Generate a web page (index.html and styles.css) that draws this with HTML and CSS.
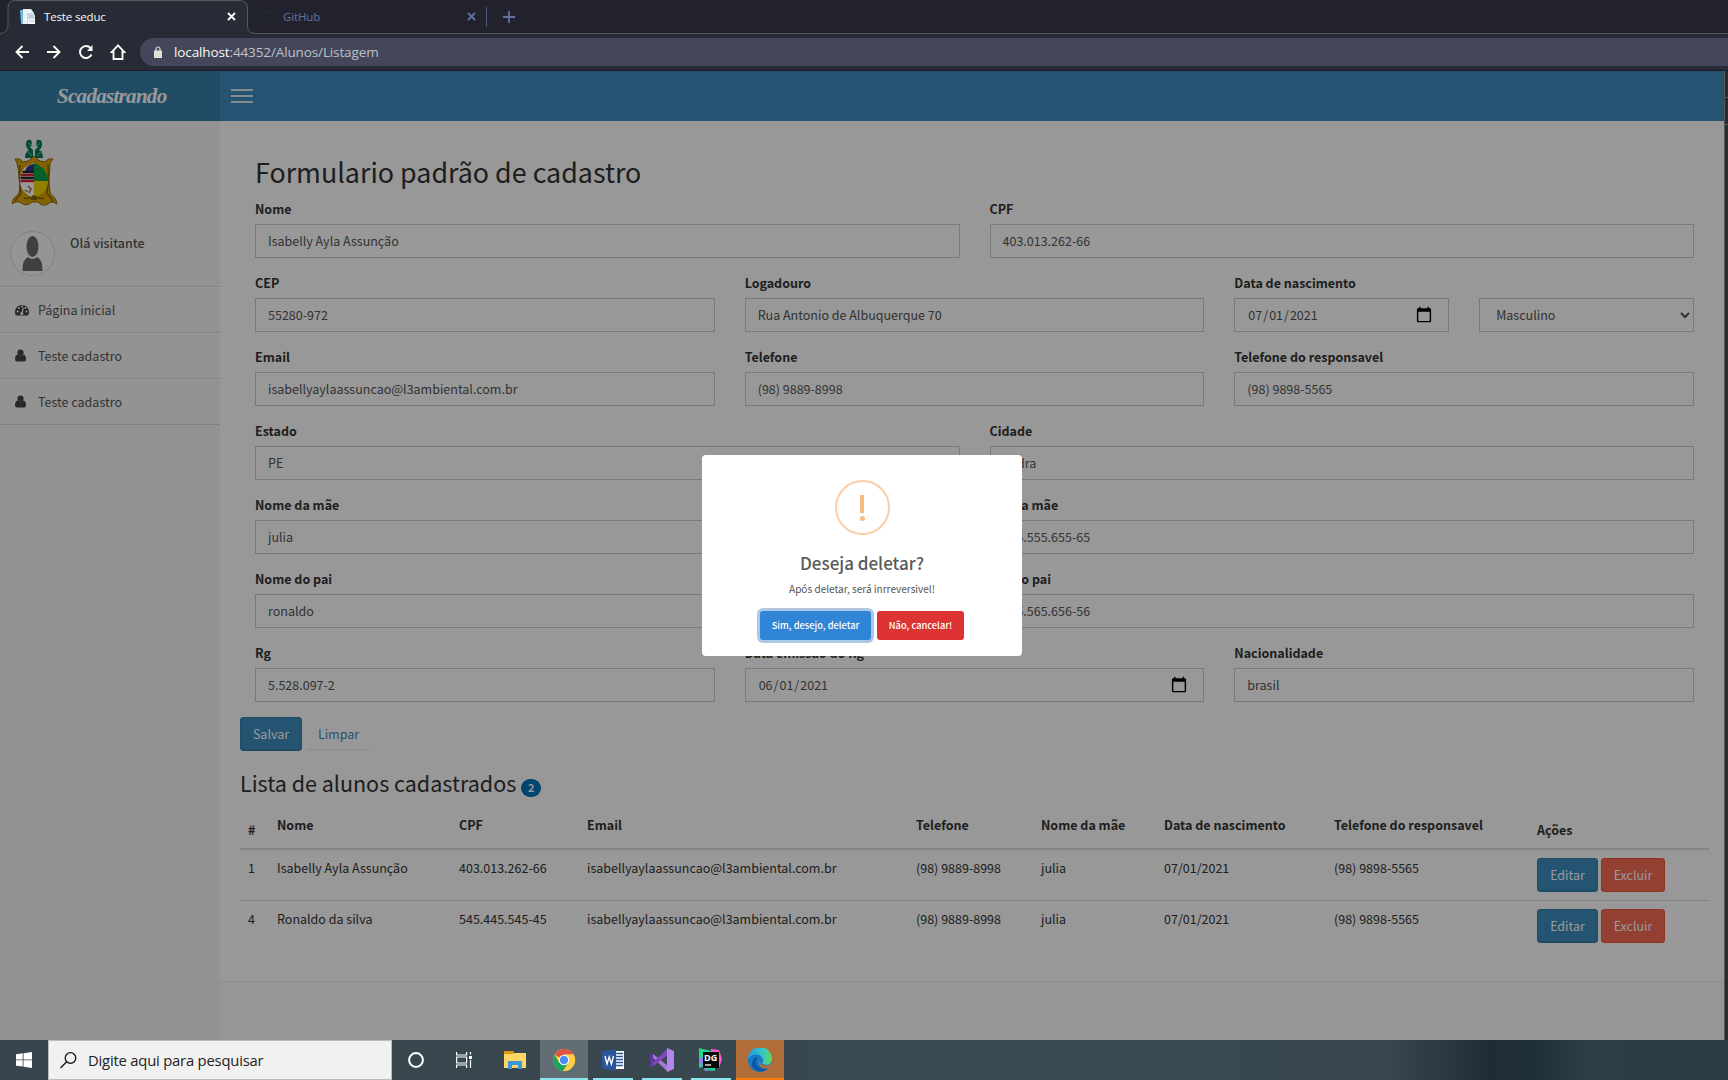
FILE: index.html
```html
<!DOCTYPE html>
<html lang="pt-br">
<head>
<meta charset="utf-8">
<title>Teste seduc</title>
<link rel="stylesheet" href="styles.css">
</head>
<body>
<div class="tabs">
  <svg class="tab-outline" width="256" height="34" fill="none"><path d="M0 33.500Q8 33 8 25V8Q8 .5 15.500 .5H239Q247.500 .5 247.500 8V26Q247.500 33.500 255 33.500V34H0Z" fill="#282a36"/><path d="M0 33.500Q8 33 8 25V8Q8 .5 15.500 .5H239Q247.500 .5 247.500 8V26Q247.500 33.500 256 33.500" stroke="#56575f"/></svg>
  <div class="tab tab-active">
    <svg width="16" height="16"><path d="M0 1h5v14H1z" fill="#72b8dc"/><path d="M3 0h8l3 4v11H3z" fill="#eef3f6"/><path d="M7 4h6l2 2v9H7z" fill="#cdd7e4"/><path d="M8 10h7v5H8z" fill="#f6f7fa"/><path d="M9 7h4M9 12h5" stroke="#aebccc"/></svg>
    <span class="tab-name">Teste seduc</span>
    <svg class="tab-close" width="9" height="9" stroke="#fff" stroke-width="1.800"><path d="M1 1l7 7M8 1L1 8"/></svg>
  </div>
  <div class="tab tab-idle">
    <svg width="16" height="16" viewBox="0 0 16 16" fill="#1e2931"><path d="M8 1a7 7 0 0 0-2.200 13.600v-2C3.800 13 3.400 11.700 3.400 11.700c.8.100 1.200.9 1.200.9.500.5 1 .4 1.400.2 0-.5.200-.8.400-1C4.700 11.500 3.200 11 3.200 8.200c0-.8.300-1.400.7-1.900 0-.5-.2-1.200.1-2 0 0 .6-.2 2 .7a7 7 0 0 1 4 0c1.400-.9 2-.7 2-.7.300.8.100 1.500.1 2 .4.500.7 1.100.7 1.900 0 2.800-1.500 3.300-3.200 3.600.3.200.5.700.5 1.400v1.500A7 7 0 0 0 8 1z"/></svg>
    <span class="tab-name">GitHub</span>
    <svg class="tab-close" width="9" height="9" stroke="#6272a4" stroke-width="1.800"><path d="M1 1l7 7M8 1L1 8"/></svg>
  </div>
  <i class="tab-split"></i>
  <svg class="tab-new" width="12" height="12" stroke="#6272a4" stroke-width="1.800"><path d="M6 0v12M0 6h12"/></svg>
</div>
<div class="toolbar">
  <svg width="14" height="14" fill="none" stroke="#f8f8f2" stroke-width="1.900"><path d="M14 7H1.500M7.500 1L1.500 7l6 6"/></svg>
  <svg width="14" height="14" fill="none" stroke="#f8f8f2" stroke-width="1.900"><path d="M0 7h12.500M6.500 1l6 6-6 6"/></svg>
  <svg width="14" height="14" fill="none" stroke="#f8f8f2" stroke-width="2"><path d="M12.500 9.500A6 6 0 1 1 11.500 3"/><path d="M13.500 0v6H8z" fill="#f8f8f2" stroke="none"/></svg>
  <svg class="home" width="16" height="16" fill="none" stroke="#f8f8f2" stroke-width="1.900"><path d="M8 1.400L1.700 8H3.500v7h9V8h1.800z"/></svg>
  <div class="address">
    <svg width="8" height="12" viewBox="0 0 8 12"><path d="M0 4.500h8V12H0z" fill="#e0e2da"/><path d="M2 5V3a2 2 0 0 1 4 0v2" fill="none" stroke="#e0e2da" stroke-width="1.200"/></svg>
    <span><b>localhost</b>:44352/Alunos/Listagem</span>
  </div>
</div>

<div class="viewport">
  <div class="app">
    <header class="topbar">
      <div class="logo">Scadastrando</div>
      <div class="burger"><i></i><i></i><i></i></div>
    </header>
    <aside class="sidebar">
      <svg class="crest" width="48" height="70" viewBox="0 0 48 70">
        <path d="M21 2q-5-1-5 4 0 4 3 6-4 2-4 8h8V12l-3-3q3-3 1-7zM27 2q5-1 5 4 0 4-3 6 4 2 4 8h-8V12l3-3q-3-3-1-7z" fill="#087b50"/>
        <path d="M17 13l5 5M32 13l-5 5M18 5l4 3M30 5l-4 3" stroke="#4bb18b" stroke-width="1.300"/>
        <path d="M5 21q6-1 7 3 6 0 9-3l3-3 3 3q3 3 9 3 1-4 7-3l-3 4q0 9-1 15 0 12 2 17 5 2 6 9-6-4-9 0-6 3-10-2h-6q-5 5-11 1-3-3-9 1 1-7 6-9 3-6 1-16 0-9-2-16z" fill="#d9a404" stroke="#8f6b0c"/>
        <path d="M10 27q-1 17 1 28l-6 8M38 27q1 17-1 28l6 8M14 60q5 2 8-3M34 60q-5 2-8-3" fill="none" stroke="#876408" stroke-width="1.500"/>
        <path d="M24 25v35q-14-5-14-18 0-13 14-17z" fill="#fff"/>
        <path d="M12.500 34H24M10.500 40H24" stroke="#272727" stroke-width="2.500"/><path d="M11 37h13M10.500 43H24" stroke="#d91f3b" stroke-width="2.300"/>
        <path d="M17 29q3-3 7-3v7h-9z" fill="#383087"/><path d="M24 25q13 4 14 18H24z" fill="#0aa042"/><path d="M38 43q0 12-14 17V43z" fill="#f4d400"/>
        <path d="M15 52l3 2M18 48l3 3-2 4" fill="none" stroke="#8a794c" stroke-width="1.500"/><path d="M21 59q3-4 6 0v3h-6z" fill="#806006"/>
      </svg>
      <div class="user">
        <svg width="45" height="45"><circle cx="22.500" cy="22.500" r="22" fill="#f8f8f8" stroke="#d8d8da"/><ellipse cx="22.500" cy="15.500" rx="6" ry="10.500" fill="#6b6b6b"/><path d="M12.500 40q0-12 5.500-14 4.500 4 9 0 5.500 2 5.500 14z" fill="#6b6b6b"/></svg>
        <b>Olá visitante</b>
      </div>
      <nav>
        <a><svg width="14" height="14" viewBox="0 0 14 14"><path d="M1 12.500A7 7 0 1 1 13 12.500z" fill="#444"/><g fill="#f9fafc"><circle cx="2.600" cy="8.500" r="1"/><circle cx="4" cy="5" r="1"/><circle cx="7.200" cy="3.600" r="1"/><circle cx="10.400" cy="5" r="1"/><circle cx="11.600" cy="8.500" r="1"/></g><path d="M8.300 5L7 10" stroke="#f9fafc" stroke-width="1.200"/><circle cx="6.800" cy="10.500" r="1.500" fill="#f9fafc"/></svg>Página inicial</a>
        <a><svg width="14" height="14"><path d="M0 10.500q0-5 3-5 2.500 2 5 0 3 0 3 5 0 2-2 2H2q-2 0-2-2z" fill="#444"/><circle cx="5.500" cy="3.500" r="3.100" fill="#444"/></svg>Teste cadastro</a>
        <a><svg width="14" height="14"><path d="M0 10.500q0-5 3-5 2.500 2 5 0 3 0 3 5 0 2-2 2H2q-2 0-2-2z" fill="#444"/><circle cx="5.500" cy="3.500" r="3.100" fill="#444"/></svg>Teste cadastro</a>
      </nav>
    </aside>
    <main class="content">
      <form class="form">
        <h2>Formulario padrão de cadastro</h2>
        <div class="row halves">
          <label>Nome<input value="Isabelly Ayla Assunção"></label>
          <label>CPF<input value="403.013.262-66"></label>
        </div>
        <div class="row thirds">
          <label>CEP<input value="55280-972"></label>
          <label>Logadouro<input value="Rua Antonio de Albuquerque 70"></label>
          <div class="row halves nested">
            <label>Data de nascimento<input type="date" value="2021-07-01"></label>
            <label>&nbsp;<select><option>Masculino</option></select></label>
          </div>
        </div>
        <div class="row thirds">
          <label>Email<input value="isabellyaylaassuncao@l3ambiental.com.br"></label>
          <label>Telefone<input value="(98) 9889-8998"></label>
          <label>Telefone do responsavel<input value="(98) 9898-5565"></label>
        </div>
        <div class="row halves">
          <label>Estado<input value="PE"></label>
          <label>Cidade<input value="Pedra"></label>
        </div>
        <div class="row halves">
          <label>Nome da mãe<input value="julia"></label>
          <label>Cpf da mãe<input value="555.555.655-65"></label>
        </div>
        <div class="row halves">
          <label>Nome do pai<input value="ronaldo"></label>
          <label>Cpf do pai<input value="565.565.656-56"></label>
        </div>
        <div class="row thirds">
          <label>Rg<input value="5.528.097-2"></label>
          <label>Data emissão do Rg<input type="date" value="2021-06-01"></label>
          <label>Nacionalidade<input value="brasil"></label>
        </div>
      </form>
      <div class="actions"><button class="btn btn-primary save">Salvar</button><button class="btn btn-link">Limpar</button></div>
      <h3>Lista de alunos cadastrados <span class="badge">2</span></h3>
      <table>
        <colgroup><col class="c-id"><col class="c-name"><col class="c-cpf"><col class="c-email"><col class="c-tel"><col class="c-mother"><col class="c-birth"><col class="c-resp"><col class="c-act"></colgroup>
        <thead><tr><th class="low">#</th><th>Nome</th><th>CPF</th><th>Email</th><th>Telefone</th><th>Nome da mãe</th><th>Data de nascimento</th><th>Telefone do responsavel</th><th class="low">Ações</th></tr></thead>
        <tbody>
          <tr><td>1</td><td>Isabelly Ayla Assunção</td><td>403.013.262-66</td><td>isabellyaylaassuncao@l3ambiental.com.br</td><td>(98) 9889-8998</td><td>julia</td><td>07/01/2021</td><td>(98) 9898-5565</td><td><div class="cell-actions"><button class="btn btn-primary edit">Editar</button><button class="btn btn-danger">Excluir</button></div></td></tr>
          <tr><td>4</td><td>Ronaldo da silva</td><td>545.445.545-45</td><td>isabellyaylaassuncao@l3ambiental.com.br</td><td>(98) 9889-8998</td><td>julia</td><td>07/01/2021</td><td>(98) 9898-5565</td><td><div class="cell-actions"><button class="btn btn-primary edit">Editar</button><button class="btn btn-danger">Excluir</button></div></td></tr>
        </tbody>
      </table>
    </main>
    <div class="overlay">
      <div class="modal">
        <div class="warn"><i></i><b></b></div>
        <h4>Deseja deletar?</h4>
        <p>Após deletar, será inrreversivel!</p>
        <div class="modal-actions"><button class="confirm">Sim, desejo, deletar</button><button class="cancel">Não, cancelar!</button></div>
      </div>
    </div>
  </div>
  <div class="edge-strip"><i></i><i></i></div>
</div>

<footer class="taskbar">
  <div class="start"><svg width="16" height="16" fill="#fff"><path d="M0 2.200L6.700 1.300V7.500H0zM7.500 1.200L16 0V7.500H7.500zM0 8.300H6.700V14.600L0 13.700zM7.500 8.300H16V16L7.500 14.700z"/></svg></div>
  <div class="search"><svg width="17" height="17" fill="none" stroke="#111" stroke-width="1.300"><circle cx="10.500" cy="6" r="5.300"/><path d="M6.700 9.800L.5 16"/></svg><span>Digite aqui para pesquisar</span></div>
  <div class="task"><svg width="16" height="16" fill="none" stroke="#fff" stroke-width="2"><circle cx="8" cy="8" r="6.900"/></svg></div>
  <div class="task"><svg width="16" height="16" fill="none" stroke="#fff" stroke-width="1.200"><path d="M.6 0v3h10V0M.6 16v-3h10v3M.6 5h10v6H.6zM14.500 0v2.500M14.500 8v8"/><path d="M13 4h3v3h-3z" fill="#fff" stroke="none"/></svg></div>
  <div class="task folder"><svg width="22" height="18"><path d="M0 0h9l1 2h12v15H0z" fill="#ffd767"/><path d="M0 0h9l1 2-1 1H0z" fill="#d99b13"/><path d="M4 18v-8h14v8h-4v-4H8v4z" fill="#3898dc"/></svg></div>
  <div class="task active chrome"><svg width="24" height="24" viewBox="0 0 24 24"><circle cx="12" cy="12" r="11" fill="#ffcd42"/><path d="M12 12L2.500 6.500A11 11 0 0 1 21.600 6.500H12z" fill="#de5246"/><path d="M12 12l-1 11A11 11 0 0 1 2.500 6.500L7.200 15z" fill="#1aa260"/><path d="M16.800 14.700L11 23l-4-8z" fill="#1aa260"/><path d="M16.800 14.700L11 23A11 11 0 0 0 21.600 6.500H12z" fill="#ffcd42"/><circle cx="12" cy="12" r="5.200" fill="#fff"/><circle cx="12" cy="12" r="4.200" fill="#4e8df5"/></svg></div>
  <div class="task open word"><svg width="23" height="22"><path d="M13 2h9v18h-9z" fill="#fff"/><path d="M14 4.500h7M14 7.500h7M14 10.500h7M14 13.500h7M14 16.500h7" stroke="#2b579a" stroke-width="1.300"/><path d="M0 2.500L14 0v22L0 19.500z" fill="#2b579a"/><path d="M3 7l2 8 2.200-7L9.400 15 11.500 7" fill="none" stroke="#fff" stroke-width="1.400"/></svg></div>
  <div class="task open"><svg width="24" height="24"><path d="M0 7l3-1 15 12V24z" fill="#a179dc"/><path d="M18 0L0 17l2 2L18 7z" fill="#7d48b9"/><path d="M0 6l3-1v14l-3-2z" fill="#6336a0"/><path d="M17 0l7 3v18l-7 3z" fill="#b585ee"/></svg></div>
  <div class="task open"><svg width="24" height="24"><path d="M0 0l12 3-3 14-9 3z" fill="#21d789"/><path d="M12 1l8 1 3 9-3 9-8-3z" fill="#ff5bd1"/><path d="M0 12l4-3 12 13-10 1-3-6z" fill="#9775f8"/><path d="M3 19h13v4l-8-1z" fill="#20c997"/><path d="M4 4h16v16H4z" fill="#090909"/><text class="dg" x="5" y="13">DG</text><path d="M6 17h6" stroke="#fff" stroke-width="1.300"/></svg></div>
  <div class="task edge"><svg width="24" height="24" viewBox="0 0 24 24"><defs><linearGradient id="e1"><stop stop-color="#229ce0"/><stop offset=".6" stop-color="#35c5c6"/><stop offset="1" stop-color="#65d957"/></linearGradient></defs><circle cx="12" cy="12" r="12" fill="#1479c8"/><path d="M0 11A12 12 0 0 1 24 11c0 5-5 7-9 5-2-1 1-2 0-5C13 6 5 4 0 11z" fill="url(#e1)"/><path d="M10 9c-5 5-1 13 9 12-4 5-15 2-15-5 0-4 3-7 6-7z" fill="#12549f"/><path d="M14 11c-4 2-2 5 1 6 3 1 7 0 8-1l1 2-2 2c-8 2-12-2-11-7 0-1 1-2 3-2z" fill="#b06d38"/></svg></div>
</footer>
</body>
</html>
```
FILE: styles.css
```css
* { box-sizing: border-box; }
body { margin: 0; width: 1728px; height: 1080px; overflow: hidden; display: flex; flex-direction: column; font-family: "Noto Sans CJK JP", sans-serif; font-size: 12.5px; line-height: 20px; color: #333; background: #21222c; }
svg { display: block; flex: none; }
button, input, select { font: inherit; }

/* browser frame */
.tabs { position: relative; height: 34px; flex: none; display: flex; align-items: center; background: #21222c; border-bottom: 1px solid #56575f; font: 12px/16px "Open Sans", sans-serif; }
.tab-outline { position: absolute; left: 0; top: 0; }
.tab { position: relative; display: flex; align-items: center; gap: 8px; height: 33px; color: #f8f8f2; }
.tab-name { flex: 1; font-size: 11.500px; letter-spacing: -.15px; }
.tab-active { width: 216px; margin-left: 20px; }
.tab-idle { width: 217px; margin-left: 23px; color: #6272a4; }
.tab-split { width: 1px; height: 20px; background: #50577a; margin-left: 10px; }
.tab-new { margin-left: 16px; }
.toolbar { height: 37px; flex: none; display: flex; align-items: center; gap: 18px; padding-left: 15px; background: #282a36; border-bottom: 1px solid #1b1a26; }
.home { margin-left: -1px; }
.address { flex: 1; height: 28px; margin-left: -4px; padding-left: 14px; display: flex; align-items: center; gap: 12px; border-radius: 14px 0 0 14px; background: #44475a; color: #bfc1c5; font: 13.500px/18px "Open Sans", sans-serif; letter-spacing: -.12px; }
.address b { font-weight: 400; color: #f8f8f2; }

.viewport { flex: none; height: 969px; display: flex; }
.app { position: relative; width: 1724px; display: grid; grid-template: 50px 1fr / 220px 1fr; background: #fdfdfd; }
.edge-strip { flex: 1; border-left: 1px solid #555; background: #292b30; display: flex; flex-direction: column; }
.edge-strip i { height: 27px; border-bottom: 1px solid #555; }

.topbar { grid-column: 1 / 3; display: flex; background: #3c8dbc; }
.logo { width: 220px; padding-left: 57px; background: #367fa9; color: #fff; font: italic 700 21px/51px "Liberation Serif", serif; letter-spacing: -.7px; }
.burger { margin: 18px 0 0 11px; display: flex; flex-direction: column; gap: 4px; }
.burger i { width: 22px; height: 2px; background: #dce9f0; }

.sidebar { background: #f6f6f6; padding-top: 17px; }
.crest { margin-left: 10px; }
.user { display: flex; gap: 15px; padding: 23px 0 0 10px; height: 78px; color: #555; }
.user b { line-height: 24px; font-weight: 500; }
nav { border-top: 1px solid #d8d8d8; }
nav a { height: 46px; display: flex; align-items: center; gap: 9px; padding-left: 15px; color: #555; border-bottom: 1px solid #d8d8d8; box-shadow: inset 0 1px #fff; }

.content { padding: 35px 15px 0 20px; border-bottom: 58px solid #fafafa; box-shadow: inset 0 -1px #ececec; }
.form { padding: 0 15px; }
h2, h3, h4 { margin: 0; font-weight: 400; }
h2 { font-size: 26.850px; line-height: 31px; margin-bottom: 12px; }
.row { display: grid; column-gap: 30px; height: 74px; }
.halves { grid-template-columns: 1fr 1fr; }
.thirds { grid-template-columns: repeat(3, 1fr); }
label { font-weight: 700; display: block; min-width: 0; }
input, select { display: block; width: 100%; height: 34px; margin-top: 5px; padding: 0 12px 2px; border: 1px solid #ccc; border-radius: 0; background: #fdfdfd; color: #555; font-weight: 400; outline: none; }
input[type="date"] { padding-bottom: 0; }
input::-webkit-calendar-picker-indicator { width: 18px; height: 18px; padding: 0; margin-right: 3px; }
.btn { height: 34px; padding: 0; border: 1px solid #367fa9; border-radius: 3px; color: #fff; background: #3c8dbc; }
.btn-primary { box-shadow: inset 0 -1px #367fa9; }
.save { width: 62px; }
.edit { width: 61px; }
.btn-link { width: 65px; border-color: transparent; background: #fdfdfd; color: #3c8dbc; border-bottom: 2px solid #f0f0f0; }
.btn-danger { width: 64px; background: #f56954; border-color: #f4543c; }
.actions, .cell-actions { display: flex; gap: 3px; }
.actions { gap: 4px; }
h3 { margin: 18px 0 11px; font-size: 21.500px; line-height: 27px; display: flex; gap: 5px; }
.badge { margin-top: 10px; width: 20px; height: 18px; border-radius: 9px; background: #0073b7; color: #fff; font-size: 11px; font-weight: 700; line-height: 17px; text-align: center; }
table { table-layout: fixed; width: 1469px; border-collapse: separate; border-spacing: 0; }
th, td { padding: 7px 8px; text-align: left; vertical-align: top; white-space: nowrap; }
th { height: 42px; border-bottom: 2px solid #ddd; }
.low { padding-top: 12px; }
td { height: 51px; padding: 8px 8px 0; border-bottom: 1px solid #ddd; }
tr:last-child td { border: 0; }
.c-id { width: 29px; } .c-name { width: 182px; } .c-cpf { width: 128px; } .c-email { width: 329px; } .c-tel { width: 125px; } .c-mother { width: 123px; } .c-birth { width: 170px; } .c-resp { width: 203px; } .c-act { width: 180px; }

.overlay { position: absolute; inset: 0; background: rgba(0, 0, 0, .4); display: flex; justify-content: center; align-items: center; }
.modal { width: 320px; height: 201px; border-radius: 4px; background: #fff; display: flex; flex-direction: column; align-items: center; padding-top: 25px; }
.warn { width: 55px; height: 55px; border: 2px solid #facea8; border-radius: 50%; display: flex; flex-direction: column; align-items: center; padding-top: 13px; gap: 3px; }
.warn i { width: 4px; height: 18px; background: #f8bb86; }
.warn b { width: 5px; height: 5px; border-radius: 50%; background: #f8bb86; }
h4 { margin-top: 16px; font-size: 17px; line-height: 24px; font-weight: 500; color: #595959; }
.modal p { margin: 5px 0 0; font-size: 10.050px; line-height: 18px; color: #545454; }
.modal-actions { display: flex; gap: 6px; margin-top: 13px; }
.modal-actions button { height: 29px; padding: 0 0 1px; border: 0; border-radius: 3px; color: #fff; font-size: 9.300px; font-weight: 500; }
.modal-actions .confirm { width: 111px; background: #3085d6; box-shadow: 0 0 0 3px #adc8e2; }
.modal-actions .cancel { width: 87px; background: #d33; }

.taskbar { flex: none; height: 40px; display: flex; background: linear-gradient(90deg, #37454c 0, #394a50 1150px, #38464e 1390px, #1f2c37 1490px, #1e2f37 1530px, #2c3e46 1590px, #2b3b43 100%); }
.start { width: 48px; display: grid; place-items: center; }
.search { width: 344px; border: 1px solid #bbb; background: #f1f1f1; display: flex; align-items: center; gap: 11px; padding-left: 11px; color: #222; font: 14.800px/20px "Open Sans", sans-serif; letter-spacing: -.2px; }
.task { width: 48px; display: grid; place-items: center; }
.folder { width: 52px; padding-left: 2px; }
.active { background: #616d73; border-bottom: 2px solid #8ce4ef; }
.open { width: 40px; margin: 0 4px 0 5px; border-bottom: 2px solid #8ce4ef; }
.edge { margin-left: 1px; background: #b06d38; border-bottom: 2px solid #ff7b00; }
.active, .open, .edge { padding-top: 2px; }
.dg { font: 700 9px "Open Sans", sans-serif; fill: #fff; }
```
